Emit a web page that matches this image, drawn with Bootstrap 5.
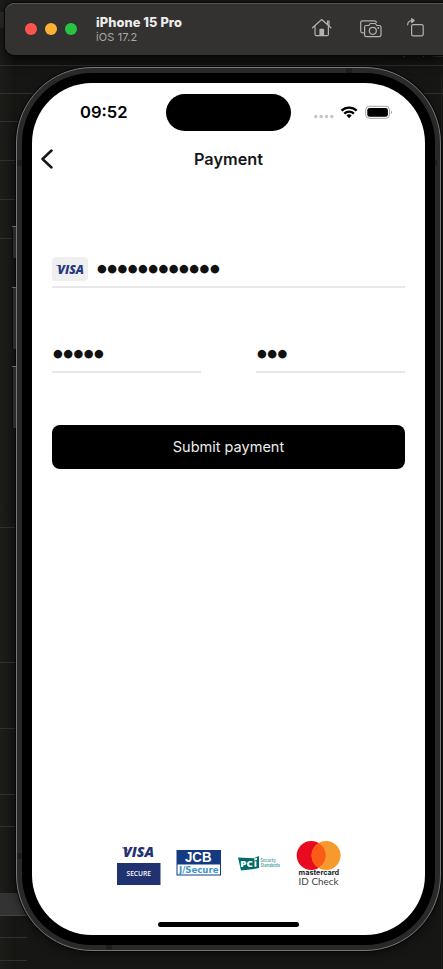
<!DOCTYPE html>
<html lang="en">
<head>
<meta charset="utf-8">
<meta name="viewport" content="width=device-width, initial-scale=1">
<title>Payment</title>
<link href="https://cdn.jsdelivr.net/npm/bootstrap@5.3.0/dist/css/bootstrap.min.css" rel="stylesheet">
<style>
body{width:443px;height:969px;background:#161614;font-family:Inter,"Liberation Sans",sans-serif;color:#161719;line-height:1}
.desktop-lines{left:0;top:0;z-index:0}
.sim-bar{margin:3px 0 0 5px;height:52px;width:438px;background:#333231;border-radius:9px 0 0 9px;box-shadow:0 0 0 1px #080808,inset 0 1px #555,0 5px 14px #000b;z-index:1}
.lights{padding-left:20px;gap:8px;width:91px}
.lights span{width:12px;height:12px}
.sim-name{font-size:12.8px;font-weight:800;letter-spacing:.1px;color:#ececec;line-height:15px}
.sim-os{font-size:11px;color:#aaa9a8;line-height:14px;letter-spacing:.1px}
.phone{margin:12px 0 0 16px;width:425px;height:884px;border-radius:76px;background:#292929;border:1px solid #777;padding:5px;box-shadow:0 0 0 1px #080808,0 3px 9px #0008;z-index:1}
.bezel{height:872px;border-radius:70px;background:#000;padding:10px}
.screen{height:852px;border-radius:60px}
.status{height:59px;padding:11px 32px 0 48px}
.clock{font-size:16.6px;font-weight:600;width:86px;line-height:37px;color:#000}
.island{width:125px;height:37px;background:#000;border-radius:19px}
.signal{margin-left:23px;height:37px}
.titlebar{height:34px;padding:0 9px;font-size:16.3px;font-weight:600}
.form-area{margin:81px 20px 0}
.field{border-bottom:2px solid #e7e7e7;height:31px;padding-bottom:6px}
.chip{width:36px;height:24px;background:#efefef;border-radius:4px}
.secret{font-family:"DejaVu Sans",sans-serif;font-size:11.200px;letter-spacing:.5px;line-height:24px;color:#111;padding-left:1px}
.number{margin-left:8px}
.split{margin-top:54px}
.half{width:149px}
.btn.pay{height:44px;background:#000;color:#ececec;border:0;border-radius:8px;font-size:14.5px;margin-top:52px;padding:0}
.logos{margin-top:369px;height:52px;padding-left:85px}
.home-line{width:141px;height:5px;border-radius:3px;background:#000;margin-top:32px}
</style>
<script src="https://cdn.jsdelivr.net/npm/bootstrap@5.3.0/dist/js/bootstrap.bundle.min.js"></script>
</head>
<body class="m-0 overflow-hidden position-relative d-flex flex-column">
<svg class="desktop-lines position-absolute" width="443" height="969" viewBox="0 0 443 969" aria-hidden="true">
<defs><linearGradient id="edge"><stop stop-color="#1d1d1a"/><stop offset="1" stop-color="#141412"/></linearGradient></defs>
<rect width="16" height="969" fill="url(#edge)"/>
<path d="M0 12h5v16H0z" fill="#2c2c2b"/>
<path d="M0 65.5h443M0 93.5h443M0 121.5h30M0 160.5h16M0 199.5h16M0 238.5h16M0 527.5h16M0 662.5h16M0 728.5h16M0 794.5h16M0 826.5h16M0 937.5h27M0 960.5h27" stroke="#30302e"/>
<path d="M0 893h30v22H0z" fill="#333"/><path d="M0 915.500h30" stroke="#444"/>
<path d="M441.500 75v252M441.500 580v389" stroke="#20201f"/><path d="M441.500 328v248" stroke="#333"/>
<path d="M403 56l2 1M423 56l1 1M433 56h10" stroke="#555"/>
</svg>

<header class="sim-bar d-flex align-items-center position-relative flex-shrink-0">
  <div class="lights d-flex flex-shrink-0">
    <span class="rounded-circle" style="background:#ff544e"></span><span class="rounded-circle" style="background:#ffb135"></span><span class="rounded-circle" style="background:#28c341"></span>
  </div>
  <div class="flex-grow-1"><div class="sim-name">iPhone 15 Pro</div><div class="sim-os">iOS 17.2</div></div>
  <svg width="133" height="24" viewBox="310 16 133 24" fill="none" stroke="#b4b2b0" stroke-width="1.2" stroke-linecap="round" stroke-linejoin="round">
    <g transform="translate(0 -.7)"><path d="M312.500 27.500l9.200-8.300 9.200 8.300M315 26v8.200q0 1.200 1.200 1.200h11q1.200 0 1.200-1.200V26M327.500 24v-3.300h1.500v4.800"/><path d="M320 35v-6h3.500v6z" fill="#b4b2b0"/>
    <path d="M363.500 32.500h-1q-1.800 0-1.800-1.800v-8.400q0-1.800 1.800-1.800h12q1.800 0 1.800 1.600"/>
    <path d="M366.300 25.200h2.500l1.500-2h5l1.500 2h2.500q1.700 0 1.700 1.700v7.800q0 1.700-1.700 1.700h-13q-1.700 0-1.700-1.700v-7.800q0-1.700 1.700-1.700z"/><circle cx="372.800" cy="30.500" r="3.500"/><circle cx="378.300" cy="27.700" r=".4"/>
    <rect x="411.600" y="24.300" width="11.600" height="11.300" rx="1.600"/><path d="M407.700 24.500q0-4.300 5.200-4.300"/><path d="M411.700 18.400l2.500 1.800-2.500 1.900z" fill="#b4b2b0"/></g>
  </svg>
</header>

<main class="phone position-relative flex-shrink-0">
 <svg class="position-absolute" style="left:-5px;top:-1px" width="425" height="884" viewBox="12 67 425 884" aria-hidden="true">
  <g fill="#2a2a2a"><path d="M12 226h4v32h-4zM12 287h4v62h-4zM12 366h4v62h-4z"/></g><path d="M12 226.500h4M12 287.500h4M12 366.500h4" stroke="#666"/><path d="M12.500 227v31M12.500 288v61M12.500 367v61" stroke="#0b0b0b"/>
  <path d="M17 160h5v6h-5zM435 160h2v6h-2zM17 853h5v6h-5zM346 68h6v5h-6zM106 945h6v5h-6z" fill="#1e1e1e"/>
 </svg>
 <div class="bezel">
  <div class="screen bg-white d-flex flex-column overflow-hidden">
   <div class="status d-flex">
    <div class="clock">09:52</div><div class="island"></div>
    <svg class="signal" width="78" height="37" viewBox="314 94 78 37">
     <g fill="#c8c8c8"><circle cx="315.800" cy="116.600" r="1.800"/><circle cx="321.200" cy="116.600" r="1.800"/><circle cx="326.500" cy="116.600" r="1.800"/><circle cx="331.800" cy="116.600" r="1.800"/></g>
     <g fill="none" stroke="#000" stroke-width="2.300"><path d="M341.500 110.600a11 11 0 0 1 15.200 0M344.300 113.600a7 7 0 0 1 9.600 0"/></g><path d="M346.500 115.400a4 4 0 0 1 5.200 0l-2.600 2.800z"/>
     <rect x="365.700" y="106.300" width="23.800" height="12" rx="3.600" fill="none" stroke="#a4a4a4"/><rect x="367.300" y="107.900" width="20.600" height="8.800" rx="2.300"/><path d="M391 110.300q2 2 0 4z" fill="#a4a4a4"/>
    </svg>
   </div>
   <div class="titlebar d-flex align-items-center">
    <svg width="12" height="20" viewBox="0 0 12 20" fill="none" stroke="#161719" stroke-width="2.500" stroke-linecap="round" stroke-linejoin="round"><path d="M10.500 1.500L1.500 10l9 8.500"/></svg>
    <div class="flex-grow-1 text-center pe-2 me-1">Payment</div>
   </div>
   <form class="form-area">
    <div class="field d-flex align-items-center">
     <div class="chip d-flex align-items-center justify-content-center"><svg width="30" height="14" viewBox="0 0 30 14" fill="#26397d"><text x="2.500" y="11.500" font-family="Open Sans" font-size="12" font-weight="800" font-style="italic" textLength="26.500" lengthAdjust="spacingAndGlyphs">VISA</text><path d="M1 2.900h4l1 2.600Q3.500 3.500 1 3.200z"/></svg></div>
     <div class="secret number">●●●●●●●●●●●●</div>
    </div>
    <div class="split d-flex justify-content-between">
     <div class="field half d-flex align-items-center"><div class="secret">●●●●●</div></div>
     <div class="field half d-flex align-items-center"><div class="secret">●●●</div></div>
    </div>
    <button type="button" class="btn pay w-100 d-flex align-items-center justify-content-center">Submit payment</button>
   </form>
   <div class="logos d-flex">
    <svg width="228" height="52" viewBox="117 838 228 52">
     <g fill="#20326f"><text x="123" y="857.300" font-family="Open Sans" font-size="13.500" font-weight="800" font-style="italic" textLength="31" lengthAdjust="spacingAndGlyphs">VISA</text><path d="M122 847.600h4.500l1.500 3.400q-2.500-2.600-6-3z"/><rect x="117" y="863" width="43.500" height="22"/></g>
     <text x="126.500" y="876.400" font-family="Open Sans" font-size="6.800" font-weight="600" fill="#fff" textLength="24.500" lengthAdjust="spacingAndGlyphs">SECURE</text>
     <rect x="176.500" y="850" width="44.500" height="25.500" fill="#143a83"/><rect x="177.500" y="864.500" width="42.500" height="10" fill="#fff"/>
     <text x="185" y="862" font-family="Liberation Sans" font-size="14" font-weight="700" fill="#fff" textLength="26.500" lengthAdjust="spacingAndGlyphs">JCB</text>
     <text x="179" y="872.500" font-family="DejaVu Sans" font-size="8" font-weight="700" fill="#3c96ca" textLength="39.500" lengthAdjust="spacingAndGlyphs">J/Secure</text>
     <path d="M238 857.500l15.500.8 5.500-2.300v12l-5 .9-13 1.600z" fill="#006b69"/><path d="M254.200 858.500l3-.7-.5 2.200-2.500.4z" fill="#fff"/>
     <text x="240.300" y="866.700" font-family="Open Sans" font-size="8.500" font-weight="800" fill="#fff" textLength="12.500" lengthAdjust="spacingAndGlyphs">PC</text><path d="M254.500 861.300h1.900v5.500h-1.900z" fill="#fff"/>
     <g font-family="Inter" font-size="4.300" font-weight="500" fill="#3b9a94"><text x="260.500" y="862.400" textLength="15.500" lengthAdjust="spacingAndGlyphs">Security</text><text x="260.500" y="867" textLength="19.500" lengthAdjust="spacingAndGlyphs">Standards</text></g>
     <circle cx="311.200" cy="855.400" r="14.500" fill="#e80b20"/><circle cx="326.100" cy="855.400" r="14.500" fill="#f79a2d"/><path d="M318.650 842.960a14.500 14.500 0 0 1 0 24.880a14.500 14.500 0 0 1 0-24.880z" fill="#f95c16"/>
     <text x="298.600" y="875.300" font-family="Inter" font-size="7.200" font-weight="700" fill="#242222" textLength="40.500" lengthAdjust="spacingAndGlyphs">mastercard</text>
     <text x="298.600" y="884.600" font-family="Lato" font-size="9.600" fill="#444" textLength="40" lengthAdjust="spacingAndGlyphs">ID Check</text>
    </svg>
   </div>
   <div class="home-line align-self-center"></div>
  </div>
 </div>
</main>
</body>
</html>
